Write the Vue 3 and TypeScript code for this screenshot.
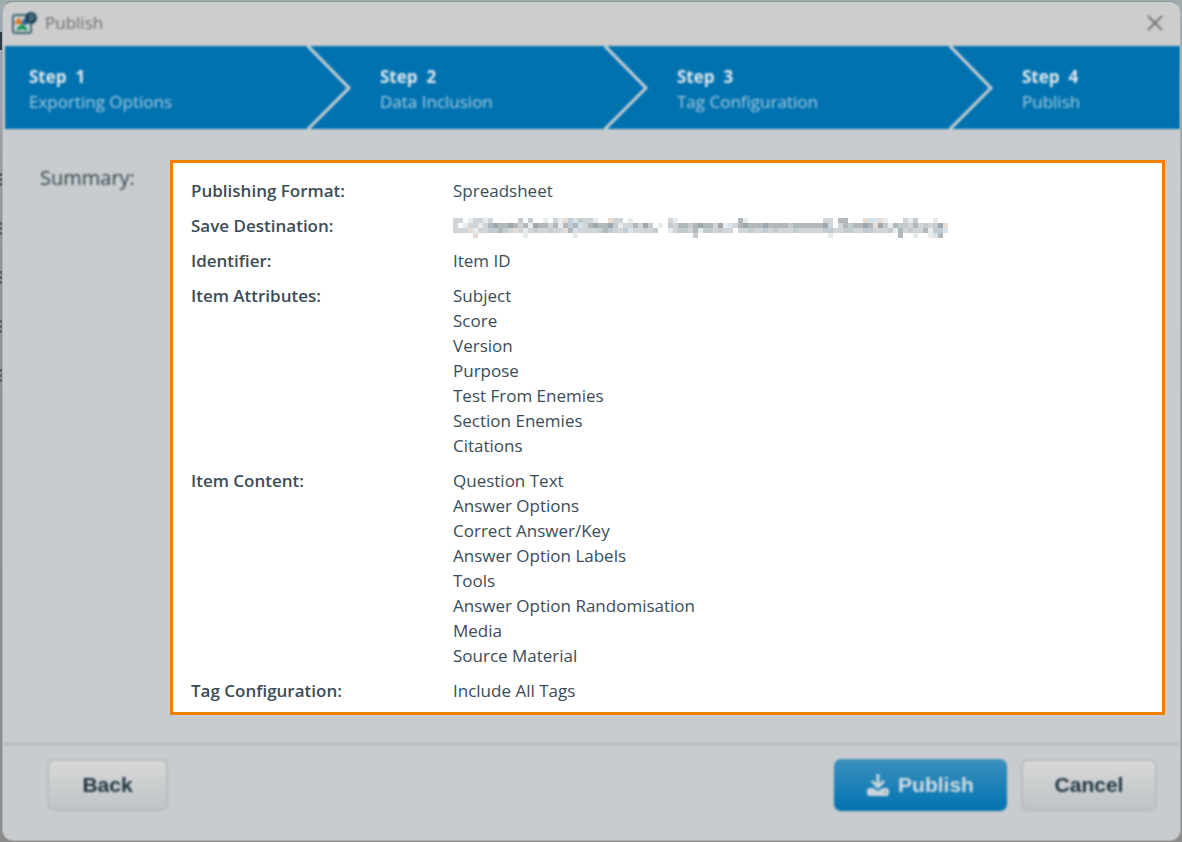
<script setup lang="ts">
interface Step {
  title: string
  label: string
}

interface SummaryRow {
  label: string
  values: string[]
}

interface Cell {
  x: number
  y: number
  fill: string
}

const steps: Step[] = [
  { title: 'Step  1', label: 'Exporting Options' },
  { title: 'Step  2', label: 'Data Inclusion' },
  { title: 'Step  3', label: 'Tag Configuration' },
  { title: 'Step  4', label: 'Publish' },
]

const rows: SummaryRow[] = [
  { label: 'Publishing Format:', values: ['Spreadsheet'] },
  { label: 'Save Destination:', values: [] },
  { label: 'Identifier:', values: ['Item ID'] },
  {
    label: 'Item Attributes:',
    values: ['Subject', 'Score', 'Version', 'Purpose', 'Test From Enemies', 'Section Enemies', 'Citations'],
  },
  {
    label: 'Item Content:',
    values: [
      'Question Text',
      'Answer Options',
      'Correct Answer/Key',
      'Answer Option Labels',
      'Tools',
      'Answer Option Randomisation',
      'Media',
      'Source Material',
    ],
  },
  { label: 'Tag Configuration:', values: ['Include All Tags'] },
]

// Pixelated mask shown in place of the private save path
const maskColumns = 99
const palette: Record<string, string> = {
  a: '#e6ebed',
  b: '#d1d5d7',
  c: '#c3cbd0',
  d: '#b1b8bb',
  e: '#9ea7ae',
  p: '#e8ddd5',
  l: '#d5e3ec',
}
const mask: string[] = [
  'bb.abbab.....c.c..a.bapclcbba..pbb.a.......ba............da...............bb.dd...pllpa...bac...a..',
  'b.abbabdeddedbdaeddbdadcdlbdeddecabbdbec.a.cbddcdeddbealbdedddeddddcddddddeb.bdcddedpecadccbdbcbcepdc',
  'bbbpabbccdcbpbabcbbcbbpdlbbbbcdcbbclbbbbc..abccbdaccbcbb.bbcbbcbcbbbcbbbbbccbbccbbccbbbcadbcbbdaccla',
  '....p.........a.........a.......................c..........................a.............d..a..ald.',
]
const cells: Cell[] = mask.flatMap((line, y) =>
  [...line.slice(0, maskColumns)].flatMap((key, x) =>
    palette[key] ? [{ x: x * 5, y: y * 5, fill: palette[key] }] : [],
  ),
)
</script>

<template>
  <div class="page">
    <section class="window" aria-label="Publish">
      <header class="titlebar soft">
        <svg class="logo" width="26" height="24" viewBox="0 0 26 24" aria-hidden="true">
          <rect x="2" y="4" width="18" height="18" rx="2" fill="#cbd3d6" stroke="#416475" stroke-width="2" />
          <path d="M3 13 8 6l4 7z" fill="#dd7419" />
          <circle cx="14" cy="11" r="3" fill="#2767a8" />
          <path d="M6 20v-3l5-4 5 4v3l-5-2z" fill="#149150" />
          <circle cx="20" cy="7" r="6" fill="#153f55" />
          <path d="M19 11V4h2a2 2 0 0 1 0 4h-2" fill="none" stroke="#8fa5af" stroke-width="1" />
        </svg>
        <h1>Publish</h1>
        <button class="close" type="button" aria-label="Close">
          <svg width="16" height="16" viewBox="0 0 16 16"><path d="M1 1l14 14M15 1L1 15" stroke="#757575" stroke-width="2" /></svg>
        </button>
      </header>

      <ol class="steps soft">
        <li v-for="(step, i) in steps" :key="step.title">
          <svg v-if="i > 0" class="chevron" width="44" height="83" viewBox="0 0 44 83" aria-hidden="true">
            <path d="M0 -1 42 42 0 84" fill="none" stroke="#cbd1d5" stroke-width="3" />
          </svg>
          <div class="step-text">
            <strong>{{ step.title }}</strong>
            <span>{{ step.label }}</span>
          </div>
        </li>
      </ol>

      <main>
        <h2 class="soft">Summary:</h2>
        <dl>
          <template v-for="row in rows" :key="row.label">
            <dt>{{ row.label }}</dt>
            <dd>
              <div v-for="value in row.values" :key="value">{{ value }}</div>
              <svg v-if="!row.values.length" class="mask" width="495" height="20" viewBox="0 0 495 20" role="img" aria-label="Hidden path" shape-rendering="crispEdges">
                <rect v-for="cell in cells" :key="cell.x + '-' + cell.y" :x="cell.x" :y="cell.y" width="5" height="5" :fill="cell.fill" />
              </svg>
            </dd>
          </template>
        </dl>
      </main>

      <footer class="soft">
        <button class="btn back" type="button">Back</button>
        <button class="btn primary" type="button">
          <svg width="22" height="22" viewBox="0 0 22 22" aria-hidden="true">
            <path d="M11 0v13M5 7l6 6 6-6" fill="none" stroke="#cdd6da" stroke-width="3" />
            <path d="M3 14h3l5 3 5-3h3a3 3 0 0 1 3 3v2a3 3 0 0 1-3 3H3a3 3 0 0 1-3-3v-2a3 3 0 0 1 3-3z" fill="#cdd6da" />
            <circle cx="18" cy="18" r="1" fill="#2a84b8" />
          </svg>
          <span>Publish</span>
        </button>
        <button class="btn cancel" type="button">Cancel</button>
      </footer>
    </section>
  </div>
</template>

<style>
body {
  margin: 0;
}
</style>

<style scoped>
* {
  box-sizing: border-box;
}
.page {
  min-height: 100vh;
  display: flex;
  padding: 1px 1px 2px 2px;
  background:
    repeating-linear-gradient(#5d666b 0 3px, transparent 3px 5px, #5d666b 5px 8px, transparent 8px 10px, #5d666b 10px 13px, transparent 13px 49px) 0 173px / 2px 210px no-repeat,
    linear-gradient(#2d3c44, #2d3c44) 0 32px / 2px 18px no-repeat,
    linear-gradient(#a0abb0, #949494 30%, #8c8c8c);
  font-family: 'Open Sans', 'Noto Sans', sans-serif;
  font-size: 17px;
  line-height: 25px;
  color: #3b4c57;
}
.window {
  flex: 1;
  display: flex;
  flex-direction: column;
  overflow: hidden;
  background: #c8ccce;
  border: 1px solid #acb0b2;
  border-top-color: #8f9598;
  border-radius: 11px;
}
.soft {
  filter: blur(1px);
}
.titlebar {
  display: flex;
  align-items: center;
  height: 44px;
  padding: 0 17px 3px 8px;
  background: #cdcdcd;
}
h1 {
  flex: 1;
  margin: 0 0 0 8px;
  font-size: 17px;
  font-weight: 400;
  color: #6c6c6c;
}
.close {
  display: flex;
  padding: 0;
  border: 0;
  background: none;
}
.steps {
  display: grid;
  grid-template-columns: 302fr 297fr 345fr 231fr;
  height: 83px;
  margin: 0 0 0 2px;
  padding: 0;
  list-style: none;
  background: #0072b0;
}
.steps li {
  display: flex;
  align-items: center;
}
.step-text {
  display: flex;
  flex-direction: column;
  padding-left: 24px;
  padding-top: 2px;
  white-space: pre;
  color: #a6cbdf;
}
.chevron + .step-text {
  padding-left: 29px;
}
.step-text strong {
  color: #e0e9ee;
}
main {
  flex: 1;
  display: grid;
  grid-template-columns: 130px 1fr;
  align-items: start;
  padding: 31px 15px 28px 37px;
}
h2 {
  margin: 4px 0 0;
  font-size: 20px;
  line-height: 28px;
  font-weight: 400;
  color: #35444e;
}
dl {
  display: grid;
  grid-template-columns: 262px 1fr;
  row-gap: 10px;
  margin: 0;
  padding: 15px 18px 9px;
  background: #fff;
  border: 3px solid #f08000;
}
dt {
  font-weight: 600;
}
dd {
  min-height: 25px;
  margin: 0;
}
.mask {
  display: block;
  margin-top: 5px;
}
footer {
  display: flex;
  align-items: flex-start;
  gap: 14px;
  height: 97px;
  padding: 14px 23px 0 44px;
  border-top: 2px solid #b4b8ba;
}
.btn {
  display: flex;
  align-items: center;
  justify-content: center;
  gap: 9px;
  height: 52px;
  padding: 0;
  border: 2px solid #b8bcbe;
  border-radius: 7px;
  background: linear-gradient(#d7d8d8, #c0c4c6);
  color: #203642;
  font: bold 21px 'Liberation Sans', Arial, sans-serif;
}
.back {
  width: 121px;
  margin-right: auto;
}
.primary {
  width: 173px;
  border: 0;
  background: linear-gradient(#3c90be, #0073b0);
  color: #d5dee2;
}
.cancel {
  width: 136px;
}
</style>
